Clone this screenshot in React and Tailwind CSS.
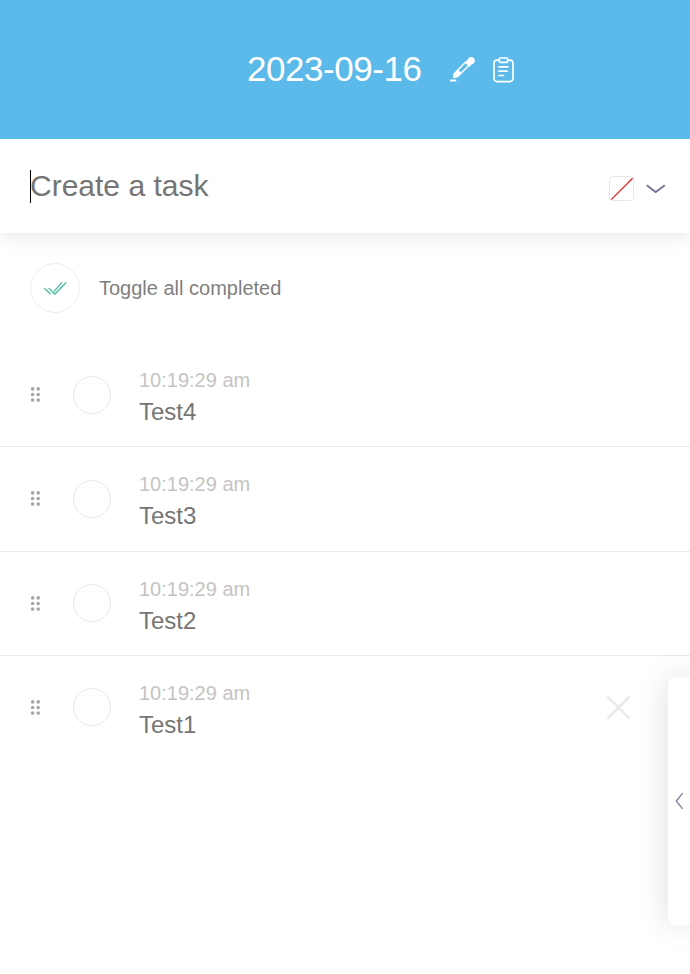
const tasks = [
  { name: 'Test4', row: 'h-[105px] border-b pt-[2px]', text: 'mt-[2px]', handle: '' },
  { name: 'Test3', row: 'h-[105px] border-b', text: 'mt-[2px]', handle: '' },
  { name: 'Test2', row: 'h-[104px] border-b pb-[2px]', text: 'mt-[4px]', handle: 'mt-[2px]' },
  { name: 'Test1', row: 'h-[104px] pb-[2px]', text: 'mt-[4px]', handle: 'mt-[2px]', removable: true },
];

function DragHandle({ className }) {
  return (
    <svg className={`h-[18px] w-[12px] shrink-0 ${className}`} viewBox="0 0 12 18" fill="#a5a5a5">
      {[2.9, 8.5, 14.1].map((y) => (
        <g key={y}>
          <circle cx="2.6" cy={y} r="1.8" />
          <circle cx="8.2" cy={y} r="1.8" />
        </g>
      ))}
    </svg>
  );
}

function Dropper() {
  return (
    <svg className="mb-px h-[28px] w-[28px]" viewBox="0 0 28 28" fill="none" stroke="#fff">
      <path d="M2 25.4H6.4" strokeWidth="2" strokeLinecap="round" />
      <path d="M15.6 8 5.4 18.8 4.8 22.2 8.6 21.4 19.6 10.8" strokeWidth="1.5" strokeLinejoin="round" />
      <path d="M4.2 22.9 4.8 18.4 8.8 14.4 12.6 18 8.6 22.1Z" fill="#fff" stroke="none" />
      <path d="M15 7.2 18.4 5.2C18.8 3.2 20.5 1.9 22.5 2C24.9 2.1 26.3 4.3 25.7 6.4C25.2 8.3 24 9.1 22.6 9.3L20.6 12Z" fill="#fff" stroke="none" />
    </svg>
  );
}

function Clipboard() {
  return (
    <svg className="mt-px h-[28px] w-[24px]" viewBox="0 0 24 28" fill="none" stroke="#fff" strokeWidth="1.7" strokeLinecap="round" strokeLinejoin="round">
      <path d="M7.5 4.2H5A3 3 0 0 0 2 7.2V22.6A3 3 0 0 0 5 25.6H18A3 3 0 0 0 21 22.6V7.2A3 3 0 0 0 18 4.2H15.5" />
      <rect x="7.2" y="2" width="8.6" height="4.3" rx="1.4" />
      <path d="M7 10.8H16M7 15.2H15M7 19.5H11.5" />
    </svg>
  );
}

export default function App() {
  return (
    <div className="relative flex h-[974px] w-[690px] flex-col overflow-hidden bg-white font-['Liberation_Sans',Arial,sans-serif]">
      <header className="relative z-10 flex h-[139px] shrink-0 items-center bg-[#5bbae9] pl-[247px]">
        <h1 className="w-[200px] pb-[2px] text-[35px] leading-[40px] tracking-[-0.45px] text-white">2023-09-16</h1>
        <div className="flex items-center gap-[15px] pl-[2px]">
          <Dropper />
          <Clipboard />
        </div>
      </header>

      <div className="flex h-[94px] shrink-0 items-center bg-white pr-[24px] pl-[30px] shadow-[0_4px_18px_rgba(0,0,0,0.09)]">
        <span className="h-[33px] w-px bg-black" />
        <span className="-ml-px flex-1 text-[30px] leading-[34px] text-[#757575]">Create a task</span>
        <svg className="mt-[6px] h-[26px] w-[26px]" viewBox="0 0 26 26" fill="none">
          <rect x="0.5" y="0.5" width="24" height="24" rx="3" stroke="#e8e8e8" />
          <path d="M2.2 23.6 23.6 2.2" stroke="#f52222" strokeWidth="1.3" />
        </svg>
        <svg className="mt-[5px] ml-[11px] h-[12px] w-[20px]" viewBox="0 0 20 12" fill="none">
          <path d="M.7 2.2 9.7 9 18.8 2.2" stroke="#77779a" strokeWidth="2" />
        </svg>
      </div>

      <div className="flex h-[109px] shrink-0 items-center pl-[30px]">
        <div className="flex h-[50px] w-[50px] items-center justify-center rounded-full border border-[#ededed]">
          <svg className="h-[14px] w-[24px]" viewBox="0 0 24 14" fill="none" stroke="#4dbda4" strokeWidth="1.4">
            <path d="M1.2 7.3 7.6 13M5.7 7.3 12 13 23.2 1.4M11 10.4 19 1.4" />
          </svg>
        </div>
        <span className="ml-[19px] text-[20px] leading-[24px] text-[#808080]">Toggle all completed</span>
      </div>

      <ul>
        {tasks.map((task) => (
          <li key={task.name} className={`flex items-center border-[#ebebeb] pr-[59px] pl-[30px] ${task.row}`}>
            <DragHandle className={task.handle} />
            <span className="ml-[31px] h-[38px] w-[38px] shrink-0 rounded-full border border-[#e9e9e9]" />
            <div className={`ml-[28px] flex-1 ${task.text}`}>
              <p className="text-[20px] leading-[32px] text-[#c4c4c4]">10:19:29 am</p>
              <p className="text-[24px] leading-[32px] text-[#757575]">{task.name}</p>
            </div>
            {task.removable && (
              <svg className="h-[26px] w-[26px]" viewBox="0 0 26 26" fill="none" stroke="#ebebeb" strokeWidth="2.8" strokeLinecap="round">
                <path d="M3.2 3.2 23.8 23.8M23.8 3.2 3.2 23.8" />
              </svg>
            )}
          </li>
        ))}
      </ul>

      <aside className="absolute top-[677px] right-0 flex h-[248px] w-[22px] items-center rounded-l-[8px] bg-white pl-[7px] shadow-[0_0_30px_rgba(0,0,0,0.15)]">
        <svg className="h-[18px] w-[10px]" viewBox="0 0 10 18" fill="none" stroke="#77779a" strokeWidth="1.2">
          <path d="M7.6 1.2 1.3 9 7.6 16.8" />
        </svg>
      </aside>
    </div>
  );
}
